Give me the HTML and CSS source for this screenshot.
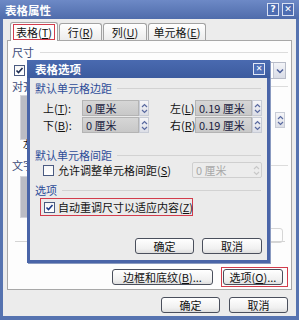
FILE: index.html
```html
<!DOCTYPE html>
<html lang="zh">
<head>
<meta charset="utf-8">
<link rel="stylesheet" href="styles.css">
</head>
<body>
<div class="win">
  <div class="title">
    <span>表格属性</span>
    <div class="tbtns"><span class="tb">?</span><span class="tb tbx">✕</span></div>
  </div>
  <div class="body">
    <div class="tabs">
      <div class="tab active w1"><span class="red">表格(<u>T</u>)</span></div>
      <div class="tab w2">行(<u>R</u>)</div>
      <div class="tab w3">列(<u>U</u>)</div>
      <div class="tab w4">单元格(<u>E</u>)</div>
    </div>
    <div class="page">
      <div class="ohd">尺寸</div>
      <div class="orow1">
        <span class="chk on"><svg width="9" height="9" viewBox="0 0 9 9"><path d="M1.5 4.5 L3.5 6.5 L7.5 2" fill="none" stroke="#1a2a50" stroke-width="1.6"/></svg></span>
        <div class="combo"><span class="cin"></span><span class="cbtn"><svg width="8" height="6" viewBox="0 0 8 6"><path d="M1 1.5 L4 4.5 L7 1.5" fill="none" stroke="#4d5f9a" stroke-width="1.5"/></svg></span></div>
      </div>
      <div class="ohd short">对齐</div>
      <div class="orow2">
        <div class="icon"><span class="pic"></span><span class="cap">左</span></div>
        <div class="icon"><span class="pic"></span></div>
        <div class="ospin"><span class="spin"><svg width="7" height="11" viewBox="0 0 7 11"><path d="M1 4 L3.5 1.5 L6 4 M1 7 L3.5 9.5 L6 7" fill="none" stroke="#5a6aa0" stroke-width="1.2"/></svg></span></div>
      </div>
      <div class="ohd short">文字</div>
      <div class="orow3">
        <div class="icon"><span class="pic p2"></span></div>
        <div class="odis"></div>
      </div>
      <div class="ohr"></div>
      <div class="pbtns">
        <span class="btn bw1">边框和底纹(<u>B</u>)...</span>
        <span class="redbox"><span class="btn bw2">选项(<u>O</u>)...</span></span>
      </div>
    </div>
    <div class="foot">
      <span class="btn bw3">确定</span>
      <span class="btn bw3">取消</span>
    </div>
  </div>

  <div class="dlg">
    <div class="dtitle"><span>表格选项</span><span class="dx">✕</span></div>
    <div class="dbody">
      <div class="grp">默认单元格边距</div>
      <div class="fields">
        <span class="lab">上(<u>T</u>):</span><span class="inp">0 厘米</span><span class="spin"><svg width="7" height="11" viewBox="0 0 7 11"><path d="M1 4 L3.5 1.5 L6 4 M1 7 L3.5 9.5 L6 7" fill="none" stroke="#5a6aa0" stroke-width="1.2"/></svg></span>
        <span></span>
        <span class="lab">左(<u>L</u>):</span><span class="inp">0.19 厘米</span><span class="spin"><svg width="7" height="11" viewBox="0 0 7 11"><path d="M1 4 L3.5 1.5 L6 4 M1 7 L3.5 9.5 L6 7" fill="none" stroke="#5a6aa0" stroke-width="1.2"/></svg></span>
        <span class="lab">下(<u>B</u>):</span><span class="inp">0 厘米</span><span class="spin"><svg width="7" height="11" viewBox="0 0 7 11"><path d="M1 4 L3.5 1.5 L6 4 M1 7 L3.5 9.5 L6 7" fill="none" stroke="#5a6aa0" stroke-width="1.2"/></svg></span>
        <span></span>
        <span class="lab">右(<u>R</u>):</span><span class="inp">0.19 厘米</span><span class="spin"><svg width="7" height="11" viewBox="0 0 7 11"><path d="M1 4 L3.5 1.5 L6 4 M1 7 L3.5 9.5 L6 7" fill="none" stroke="#5a6aa0" stroke-width="1.2"/></svg></span>
      </div>
      <div class="grp g2">默认单元格间距</div>
      <div class="crow">
        <span class="chk"></span>
        <span class="ctext">允许调整单元格间距(<u>S</u>)</span>
        <span class="dis"><span class="dtxt">0 厘米</span><span class="spin dspin"><svg width="7" height="11" viewBox="0 0 7 11"><path d="M1 4 L3.5 1.5 L6 4 M1 7 L3.5 9.5 L6 7" fill="none" stroke="#c8c8c8" stroke-width="1.2"/></svg></span></span>
      </div>
      <div class="grp g3">选项</div>
      <div class="rrow">
        <span class="chk on"><svg width="9" height="9" viewBox="0 0 9 9"><path d="M1.5 4.5 L3.5 6.5 L7.5 2" fill="none" stroke="#1d3a8a" stroke-width="1.6"/></svg></span>
        <span class="ctext">自动重调尺寸以适应内容(<u>Z</u>)</span>
      </div>
      <div class="dbtns">
        <span class="btn bw4">确定</span>
        <span class="btn bw5">取消</span>
      </div>
    </div>
  </div>
</div>
</body>
</html>
```

FILE: styles.css
```css
* { box-sizing: border-box; }
body {
  margin: 0;
  font-family: "Noto Sans CJK SC", "Noto Sans", sans-serif;
  font-size: 11px;
  color: #111;
}
u { text-decoration: underline; }

.win {
  position: relative;
  width: 299px;
  height: 320px;
  background: #5673b0;
  padding-bottom: 4px;
  display: flex;
  flex-direction: column;
  overflow: hidden;
}
.title {
  height: 19px;
  flex: none;
  background: linear-gradient(#6d89c6, #4f6cab);
  display: flex;
  align-items: center;
  padding: 0 5px 0 5px;
  color: #fff;
  font-weight: bold;
  font-size: 11.5px;
}
.tbtns { margin-left: auto; display: flex; gap: 3px; }
.tb {
  width: 12px;
  height: 13px;
  border: 1px solid #d8e0f2;
  background: #4d6db2;
  color: #fff;
  font-size: 9px;
  font-weight: bold;
  font-family: "DejaVu Sans", sans-serif;
  display: flex;
  align-items: center;
  justify-content: center;
  line-height: 1;
}
.body {
  flex: 1;
  margin: 0 3px;
  background: #ececec;
  padding: 3px 4px 0 4px;
  display: flex;
  flex-direction: column;
}
.tabs {
  display: flex;
  height: 18px;
  padding-left: 3px;
  align-items: flex-end;
  flex: none;
}
.tab {
  height: 17px;
  border: 1px solid #a2a2a2;
  border-bottom: none;
  border-radius: 3px 3px 0 0;
  background: linear-gradient(#ffffff, #ececec);
  display: flex;
  align-items: center;
  justify-content: center;
  margin-right: 1px;
  line-height: 1;
}
.w1 { width: 48px; }
.w2 { width: 43px; }
.w3 { width: 44px; }
.w4 { width: 58px; }
.tab.active {
  height: 19px;
  margin-bottom: -1px;
  background: #fdfdfd;
  position: relative;
  z-index: 1;
  align-items: flex-end;
  padding-bottom: 1px;
}
.red {
  border: 1px solid #d23c4c;
  height: 16px;
  padding: 0 2px;
  display: flex;
  align-items: center;
}
.page {
  height: 250px;
  flex: none;
  background: #fdfdfd;
  border: 1px solid #a8a8a8;
  padding: 4px 3px 2px 4px;
  display: flex;
  flex-direction: column;
}
.ohd {
  height: 14px;
  line-height: 14px;
  color: #3c4a78;
  display: flex;
  align-items: center;
  gap: 6px;
}
.ohd::after { content: ""; flex: 1; height: 1px; background: #dcdcdc; }
.orow1 {
  margin-top: 3px;
  height: 17px;
  display: flex;
  align-items: center;
  padding-left: 2px;
}
.combo { margin-left: auto; margin-right: 2px; display: flex; height: 17px; width: 80px; border: 1px solid #b8bcc8; }
.cin { flex: 1; background: #fff; }
.cbtn {
  width: 12px;
  background: linear-gradient(#f3f4f8, #d9dce6);
  border-left: 1px solid #c4c8d4;
  display: flex;
  align-items: center;
  justify-content: center;
}
.orow2 {
  margin-top: 2px;
  height: 63px;
  display: flex;
  padding-left: 8px;
  gap: 10px;
}
.icon { display: flex; flex-direction: column; width: 38px; }
.pic { width: 38px; height: 45px; background: #bbbcc4; border: 1px solid #d4d4da; }
.p2 { height: 42px; }
.cap { margin-top: -1px; margin-left: 3px; line-height: 9px; height: 9px; font-size: 10px; }
.ospin { margin-left: auto; margin-right: 3px; margin-top: 17px; }
.ohd + .orow3 { margin-top: 4px; }
.orow3 { height: 55px; display: flex; padding-left: 8px; }
.odis {
  margin-left: auto;
  margin-right: 5px;
  margin-top: 52px;
  width: 60px;
  height: 15px;
  border: 1px solid #d6d6d6;
  border-radius: 3px;
}
.ohr { margin: 10px 3px 0 3px; height: 1px; background: #d4d4d4; }
.pbtns {
  margin-top: auto;
  display: flex;
  justify-content: flex-end;
  align-items: center;
  gap: 8px;
}
.redbox { border: 1px solid #d23c4c; padding: 1px 4px 1px 1px; display: flex; }
.btn {
  height: 16px;
  border: 1px solid #4a4f5c;
  border-radius: 3px;
  background: linear-gradient(#ffffff, #f0f0f0 70%, #dedede);
  display: flex;
  align-items: center;
  justify-content: center;
  line-height: 1;
  white-space: nowrap;
}
.bw1 { width: 101px; }
.bw2 { width: 60px; }
.bw3 { width: 59px; }
.bw4 { width: 59px; }
.bw5 { width: 60px; }
.foot {
  margin-top: 7px;
  display: flex;
  justify-content: flex-end;
  gap: 9px;
  padding-right: 4px;
}

.chk {
  width: 11px;
  height: 11px;
  border: 1px solid #4a5a80;
  background: linear-gradient(#f6f6f6, #ffffff);
  display: inline-flex;
  align-items: center;
  justify-content: center;
  flex: none;
}

/* inner dialog */
.dlg {
  position: absolute;
  left: 27px;
  top: 60px;
  width: 243px;
  height: 203px;
  background: #ebebeb;
  border: 3px solid #4a65a8;
  border-top: none;
  display: flex;
  flex-direction: column;
  box-shadow: 1px 1px 0 #8a9ac0;
  z-index: 2;
}
.dtitle {
  height: 18px;
  flex: none;
  margin: 0 -3px;
  padding: 0 5px 0 8px;
  background: linear-gradient(#4a6ab0, #3c5b9e);
  color: #fff;
  font-weight: bold;
  font-size: 11.5px;
  display: flex;
  align-items: center;
}
.dx {
  margin-left: auto;
  width: 12px;
  height: 12px;
  border: 1px solid #dfe6f6;
  background: #4e6fb6;
  color: #fff;
  font-size: 8px;
  font-family: "DejaVu Sans", sans-serif;
  font-weight: bold;
  display: flex;
  align-items: center;
  justify-content: center;
  line-height: 1;
}
.dbody {
  flex: 1;
  padding: 3px 5px 0 5px;
  display: flex;
  flex-direction: column;
}
.grp {
  height: 14px;
  line-height: 14px;
  color: #2d4c98;
  display: flex;
  align-items: center;
  gap: 5px;
}
.grp::after { content: ""; flex: 1; height: 1px; background: #d2d2d2; margin-right: 1px; }
.g2 { margin-top: 15px; }
.g3 { margin-top: 5px; }
.fields {
  margin-top: 5px;
  padding-left: 8px;
  display: grid;
  grid-template-columns: 39px 57px 10px 21px 25px 57px 10px;
  grid-auto-rows: 16px;
  row-gap: 1px;
  align-items: center;
}
.lab { white-space: nowrap; }
.inp {
  height: 16px;
  background: linear-gradient(#d6d6d6, #c8c8c8);
  border: 1px solid #b4b4b4;
  display: flex;
  align-items: center;
  padding-left: 3px;
  color: #1c2240;
  white-space: nowrap;
}
.spin {
  width: 10px;
  height: 16px;
  border: 1px solid #c8ccd6;
  background: linear-gradient(#f6f6f8, #dcdee6);
  display: flex;
  align-items: center;
  justify-content: center;
}
.crow {
  height: 16px;
  display: flex;
  align-items: center;
  padding-left: 8px;
}
.ctext { margin-left: 4px; white-space: nowrap; }
.dis {
  margin-left: auto;
  width: 70px;
  height: 16px;
  border: 1px solid #cfcfcf;
  border-radius: 2px;
  background: #ececec;
  display: flex;
  align-items: center;
}
.dtxt { flex: 1; padding-left: 3px; color: #a8a8a8; }
.dspin { border: none; background: none; }
.rrow {
  margin-top: 1px;
  margin-left: 5px;
  width: 153px;
  height: 18px;
  border: 1px solid #d23c4c;
  display: flex;
  align-items: center;
  padding-left: 3px;
}
.rrow .ctext { margin-left: 3px; }
.dbtns {
  margin-top: 22px;
  display: flex;
  justify-content: flex-end;
  gap: 8px;
}
```
